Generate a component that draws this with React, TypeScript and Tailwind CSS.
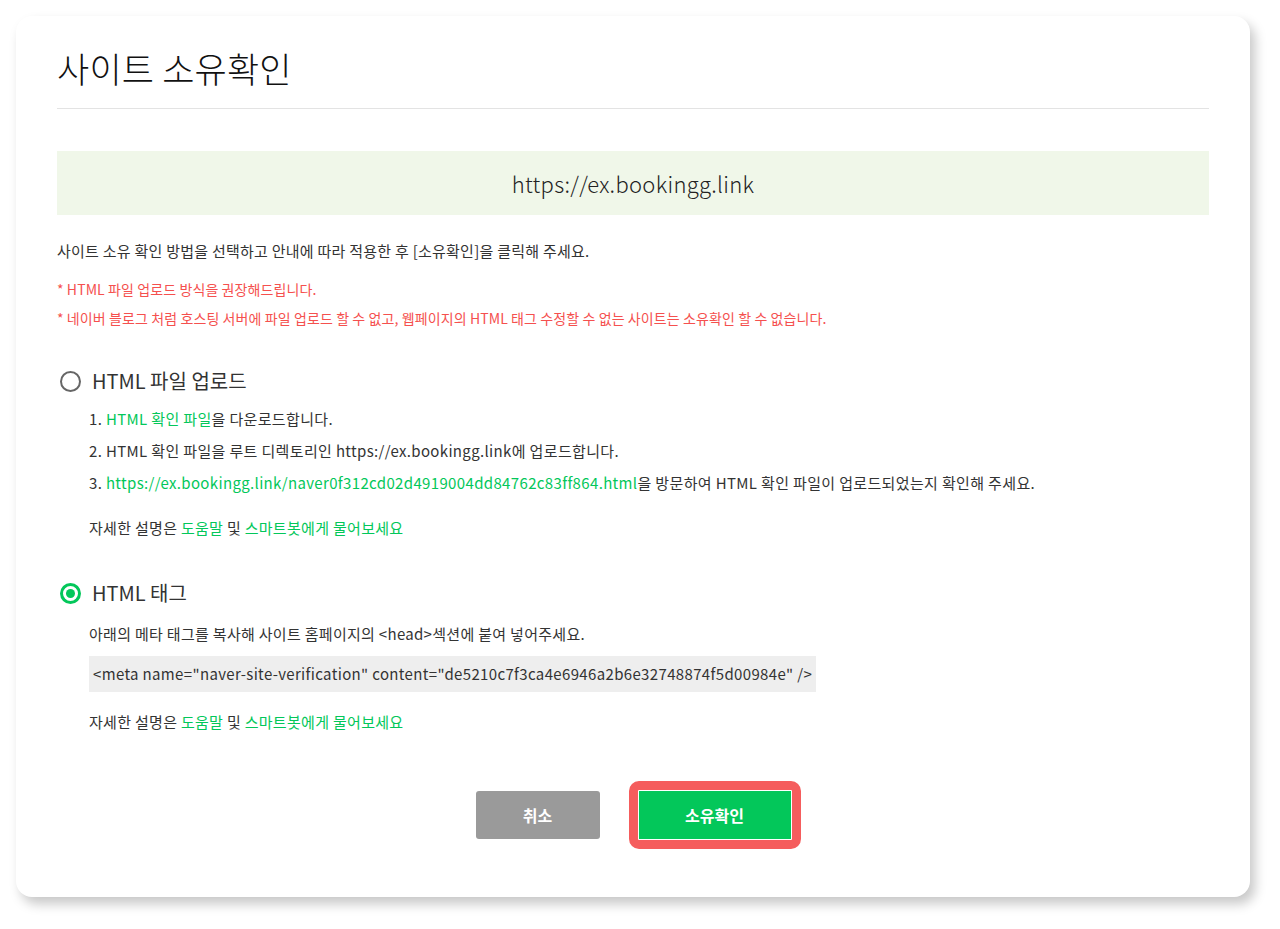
import React from 'react';

const font = { fontFamily: '"Noto Sans CJK KR", "Noto Sans", sans-serif' };

function Radio({ checked }: { checked?: boolean }) {
  if (checked) {
    return (
      <span className="flex h-[21px] w-[21px] items-center justify-center rounded-full border-[3px] border-[#03c75a] bg-white">
        <span className="h-[9px] w-[9px] rounded-full bg-[#03c75a]" />
      </span>
    );
  }
  return <span className="h-[21px] w-[21px] rounded-full border-2 border-[#666] bg-white" />;
}

function HelpLine() {
  return (
    <p className="text-[15px] leading-[20px] tracking-[0.3px] text-[#333]">
      자세한 설명은 <span className="text-[#03c75a]">도움말</span> 및{' '}
      <span className="text-[#03c75a]">스마트봇에게 물어보세요</span>
    </p>
  );
}

export default function App() {
  return (
    <div className="min-h-[929px] bg-white p-4" style={font}>
      <div className="h-[881px] w-[1234px] rounded-[16px] bg-white px-[41px] shadow-[5px_7px_12px_rgba(0,0,0,0.22)]">
        <h1 className="border-b border-[#e3e3e3] pb-[16px] pt-[28px] text-[35px] font-light leading-[48px] tracking-[0.2px] text-[#111]">
          사이트 소유확인
        </h1>

        <div className="mt-[42px] flex h-[64px] items-center justify-center bg-[#f0f7e9] text-[22px] font-light tracking-[0.3px] text-[#222]">
          https://ex.bookingg.link
        </div>

        <p className="mt-[26px] text-[15px] leading-[20px] tracking-[0.25px] text-[#333]">
          사이트 소유 확인 방법을 선택하고 안내에 따라 적용한 후 [소유확인]을 클릭해 주세요.
        </p>
        <div className="mt-[18px] text-[14px] leading-[20px] tracking-[0.1px] text-[#f5504e]">
          <p>* HTML 파일 업로드 방식을 권장해드립니다.</p>
          <p className="mt-[9px]">
            * 네이버 블로그 처럼 호스팅 서버에 파일 업로드 할 수 없고, 웹페이지의 HTML 태그 수정할 수 없는 사이트는 소유확인 할 수 없습니다.
          </p>
        </div>

        <div className="mt-[39px] flex items-center gap-[11px] pl-[3px] text-[20px] leading-[28px] text-[#333]">
          <Radio />
          <span>HTML 파일 업로드</span>
        </div>
        <div className="mt-[8px] pl-[32px]">
          <ol className="text-[15px] leading-[32px] tracking-[0.35px] text-[#333]">
            <li>
              1. <span className="text-[#03c75a]">HTML 확인 파일</span>을 다운로드합니다.
            </li>
            <li>2. HTML 확인 파일을 루트 디렉토리인 https://ex.bookingg.link에 업로드합니다.</li>
            <li>
              3. <span className="text-[#03c75a]">https://ex.bookingg.link/naver0f312cd02d4919004dd84762c83ff864.html</span>을 방문하여 HTML 확인 파일이 업로드되었는지 확인해 주세요.
            </li>
          </ol>
          <div className="mt-[19px]">
            <HelpLine />
          </div>
        </div>

        <div className="mt-[41px] flex items-center gap-[11px] pl-[3px] text-[20px] leading-[28px] text-[#333]">
          <Radio checked />
          <span>HTML 태그</span>
        </div>
        <div className="mt-[17px] pl-[32px]">
          <p className="text-[15px] leading-[20px] tracking-[0.3px] text-[#333]">
            아래의 메타 태그를 복사해 사이트 홈페이지의 &lt;head&gt;섹션에 붙여 넣어주세요.
          </p>
          <div className="mt-[12px] inline-flex h-[36px] items-center bg-[#eeeeee] px-[4px] text-[15px] tracking-[0.35px] text-[#333]">
            &lt;meta name="naver-site-verification" content="de5210c7f3ca4e6946a2b6e32748874f5d00984e" /&gt;
          </div>
          <div className="mt-[20px]">
            <HelpLine />
          </div>
        </div>

        <div className="mt-[59px] flex justify-center gap-[39px]">
          <button className="h-[48px] w-[124px] rounded-[3px] bg-[#9a9a9a] text-[16px] font-bold text-white">
            취소
          </button>
          <div className="relative">
            <span className="absolute -inset-[10px] rounded-[10px] border-[9px] border-[#f55d5d]" />
            <button className="relative h-[48px] w-[152px] bg-[#03c75a] text-[16px] font-bold text-white">
              소유확인
            </button>
          </div>
        </div>
      </div>
    </div>
  );
}
